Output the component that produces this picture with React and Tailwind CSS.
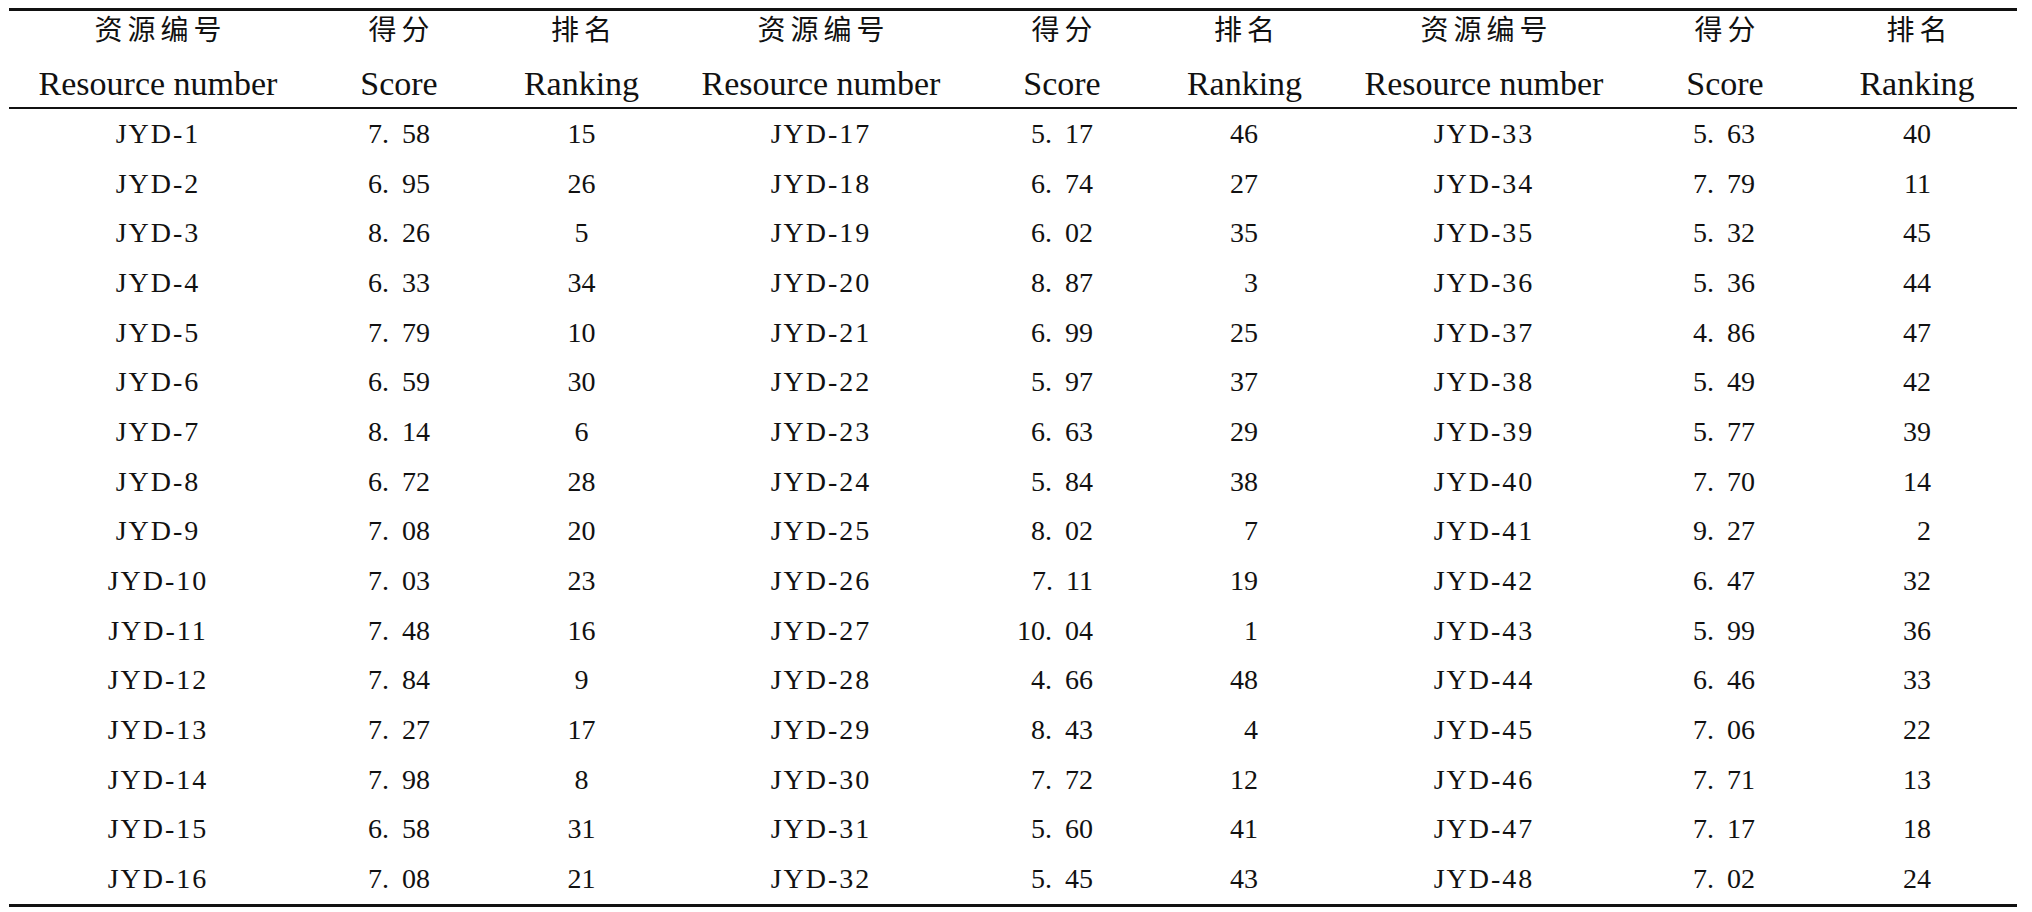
import React from "react";

const rows = [
  ["JYD-1", "7.58", "15", "JYD-17", "5.17", "46", "JYD-33", "5.63", "40"],
  ["JYD-2", "6.95", "26", "JYD-18", "6.74", "27", "JYD-34", "7.79", "11"],
  ["JYD-3", "8.26", "5", "JYD-19", "6.02", "35", "JYD-35", "5.32", "45"],
  ["JYD-4", "6.33", "34", "JYD-20", "8.87", "3", "JYD-36", "5.36", "44"],
  ["JYD-5", "7.79", "10", "JYD-21", "6.99", "25", "JYD-37", "4.86", "47"],
  ["JYD-6", "6.59", "30", "JYD-22", "5.97", "37", "JYD-38", "5.49", "42"],
  ["JYD-7", "8.14", "6", "JYD-23", "6.63", "29", "JYD-39", "5.77", "39"],
  ["JYD-8", "6.72", "28", "JYD-24", "5.84", "38", "JYD-40", "7.70", "14"],
  ["JYD-9", "7.08", "20", "JYD-25", "8.02", "7", "JYD-41", "9.27", "2"],
  ["JYD-10", "7.03", "23", "JYD-26", "7.11", "19", "JYD-42", "6.47", "32"],
  ["JYD-11", "7.48", "16", "JYD-27", "10.04", "1", "JYD-43", "5.99", "36"],
  ["JYD-12", "7.84", "9", "JYD-28", "4.66", "48", "JYD-44", "6.46", "33"],
  ["JYD-13", "7.27", "17", "JYD-29", "8.43", "4", "JYD-45", "7.06", "22"],
  ["JYD-14", "7.98", "8", "JYD-30", "7.72", "12", "JYD-46", "7.71", "13"],
  ["JYD-15", "6.58", "31", "JYD-31", "5.60", "41", "JYD-47", "7.17", "18"],
  ["JYD-16", "7.08", "21", "JYD-32", "5.45", "43", "JYD-48", "7.02", "24"],
];

const bodyAlign = [
  "justify-center",
  "justify-center",
  "justify-center",
  "justify-center",
  "justify-end pr-[61px]",
  "justify-end pr-[77px]",
  "justify-center",
  "justify-end pr-[62px]",
  "justify-end pr-[86px]",
];

const cn = ["资源编号", "得分", "排名"];
const en = ["Resource number", "Score", "Ranking"];

function Score({ v }) {
  const [a, b] = v.split(".");
  return (
    <span className="whitespace-nowrap">
      {a}.<span className="ml-[13px]">{b}</span>
    </span>
  );
}

export default function App() {
  const cols = "grid grid-cols-[298px_184px_181px_298px_184px_181px_298px_184px_200px]";
  return (
    <div className="w-[2032px] h-[912px] bg-white text-[#111] pt-[8px] pl-[9px] [font-family:Liberation_Serif,Times_New_Roman,serif]">
      <div className="w-[2008px]">
        <div className="h-[3px] bg-[#111]" />
        <div className={`${cols} h-[33px]`}>
          {[0, 1, 2, 3, 4, 5, 6, 7, 8].map((i) => (
            <div
              key={i}
              className="flex items-center justify-center pl-[5px] text-[28px] tracking-[5px] leading-none [font-family:Noto_Sans_CJK_SC,Noto_Sans,sans-serif]"
            >
              {cn[i % 3]}
            </div>
          ))}
        </div>
        <div className={`${cols} h-[63px]`}>
          {[0, 1, 2, 3, 4, 5, 6, 7, 8].map((i) => (
            <div
              key={i}
              className="flex items-end justify-center text-[34px] leading-[46px] whitespace-nowrap"
            >
              {en[i % 3]}
            </div>
          ))}
        </div>
        <div className="h-[2px] bg-[#111]" />
        <div className="text-[28px]">
          {rows.map((r, ri) => (
            <div key={ri} className={`${cols} h-[49.7px]`}>
              {r.map((c, ci) => (
                <div key={ci} className={`flex items-center ${bodyAlign[ci]}`}>
                  {ci % 3 === 0 ? (
                    <span className="tracking-[2px] whitespace-nowrap">{c}</span>
                  ) : ci % 3 === 1 ? (
                    <Score v={c} />
                  ) : (
                    <span>{c}</span>
                  )}
                </div>
              ))}
            </div>
          ))}
        </div>
        <div className="h-[3px] bg-[#111]" />
      </div>
    </div>
  );
}
